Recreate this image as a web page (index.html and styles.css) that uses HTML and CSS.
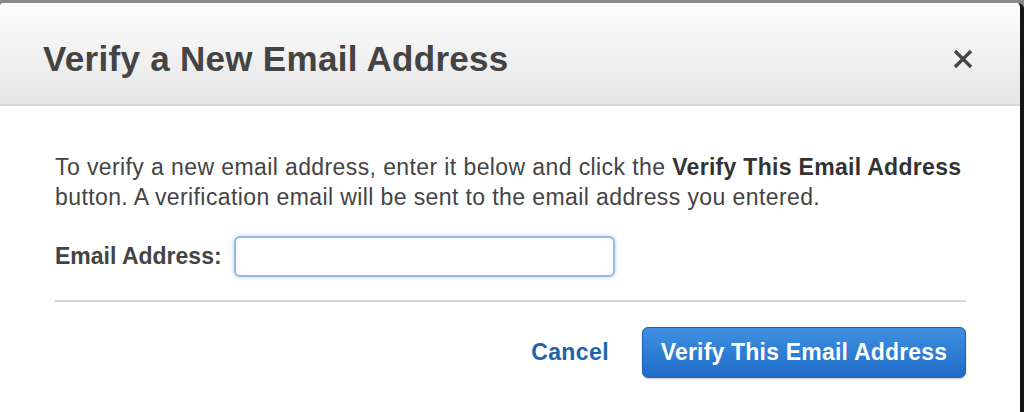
FILE: index.html
```html
<!DOCTYPE html>
<html>
<head>
<meta charset="utf-8">
<link rel="stylesheet" href="styles.css">
</head>
<body>
<div class="modal">
  <div class="modal-header">
    <h1 class="modal-title">Verify a New Email Address</h1>
    <span class="close">
      <svg width="22" height="22" viewBox="0 0 22 22"><path d="M3 3 L19 19 M19 3 L3 19" stroke="#444" stroke-width="3.2" stroke-linecap="butt"/></svg>
    </span>
  </div>
  <div class="modal-body">
    <p class="intro">To verify a new email address, enter it below and click the <b>Verify This Email Address</b><br>button. A verification email will be sent to the email address you entered.</p>
    <div class="field">
      <label class="field-label">Email Address:</label>
      <input class="field-input" type="text">
    </div>
    <div class="divider"></div>
    <div class="actions">
      <a class="cancel">Cancel</a>
      <button class="primary">Verify This Email Address</button>
    </div>
  </div>
</div>
</body>
</html>
```

FILE: styles.css
```css
html, body {
  margin: 0;
  padding: 0;
}
body {
  background: #8a8a8a;
  font-family: "Liberation Sans", Arial, sans-serif;
  height: 412px;
  overflow: hidden;
}
.modal {
  margin-top: 3px;
  height: 409px;
  background: #fff;
  border-right: 4px solid #151515;
  border-top-left-radius: 4px;
  border-top-right-radius: 6px;
  box-sizing: border-box;
}
.modal-header {
  height: 103px;
  box-sizing: border-box;
  border-bottom: 2px solid #d6d6d6;
  background: linear-gradient(#fdfdfd, #e6e6e6);
  display: flex;
  align-items: center;
  justify-content: space-between;
  padding: 11px 46px 0 43px;
  border-top-left-radius: 4px;
  border-top-right-radius: 6px;
}
.modal-title {
  margin: 0;
  font-size: 35px;
  font-weight: bold;
  color: #444;
  letter-spacing: 0.3px;
}
.close {
  display: flex;
}
.modal-body {
  padding: 46px 54px 0 55px;
}
.intro {
  margin: 0;
  font-size: 23px;
  line-height: 30px;
  color: #444;
  letter-spacing: 0.4px;
}
.intro b {
  color: #333;
  letter-spacing: 0.3px;
}
.field {
  display: flex;
  align-items: center;
  margin-top: 24px;
  gap: 12px;
}
.field-label {
  font-size: 23px;
  font-weight: bold;
  color: #444;
}
.field-input {
  width: 381px;
  height: 41px;
  box-sizing: border-box;
  border: 2px solid #8ebde9;
  border-radius: 6px;
  box-shadow: 0 0 4px rgba(90, 160, 230, 0.5);
  outline: none;
  background: #fff;
  margin: 0;
}
.divider {
  height: 2px;
  background: #d4d4d4;
  margin-top: 23px;
}
.actions {
  display: flex;
  justify-content: flex-end;
  align-items: center;
  margin-top: 25px;
  gap: 33px;
}
.cancel {
  font-size: 23px;
  font-weight: bold;
  color: #1d63ad;
  letter-spacing: 0.4px;
}
.primary {
  width: 324px;
  height: 51px;
  border: 1px solid #1c5fb0;
  border-radius: 6px;
  background: linear-gradient(#3f90e2, #1f6cc6);
  color: #fff;
  font-family: "Liberation Sans", Arial, sans-serif;
  font-size: 23px;
  font-weight: bold;
  letter-spacing: 0.2px;
  padding: 0;
  box-shadow: 0 1px 2px rgba(0,0,0,0.2);
}
```
